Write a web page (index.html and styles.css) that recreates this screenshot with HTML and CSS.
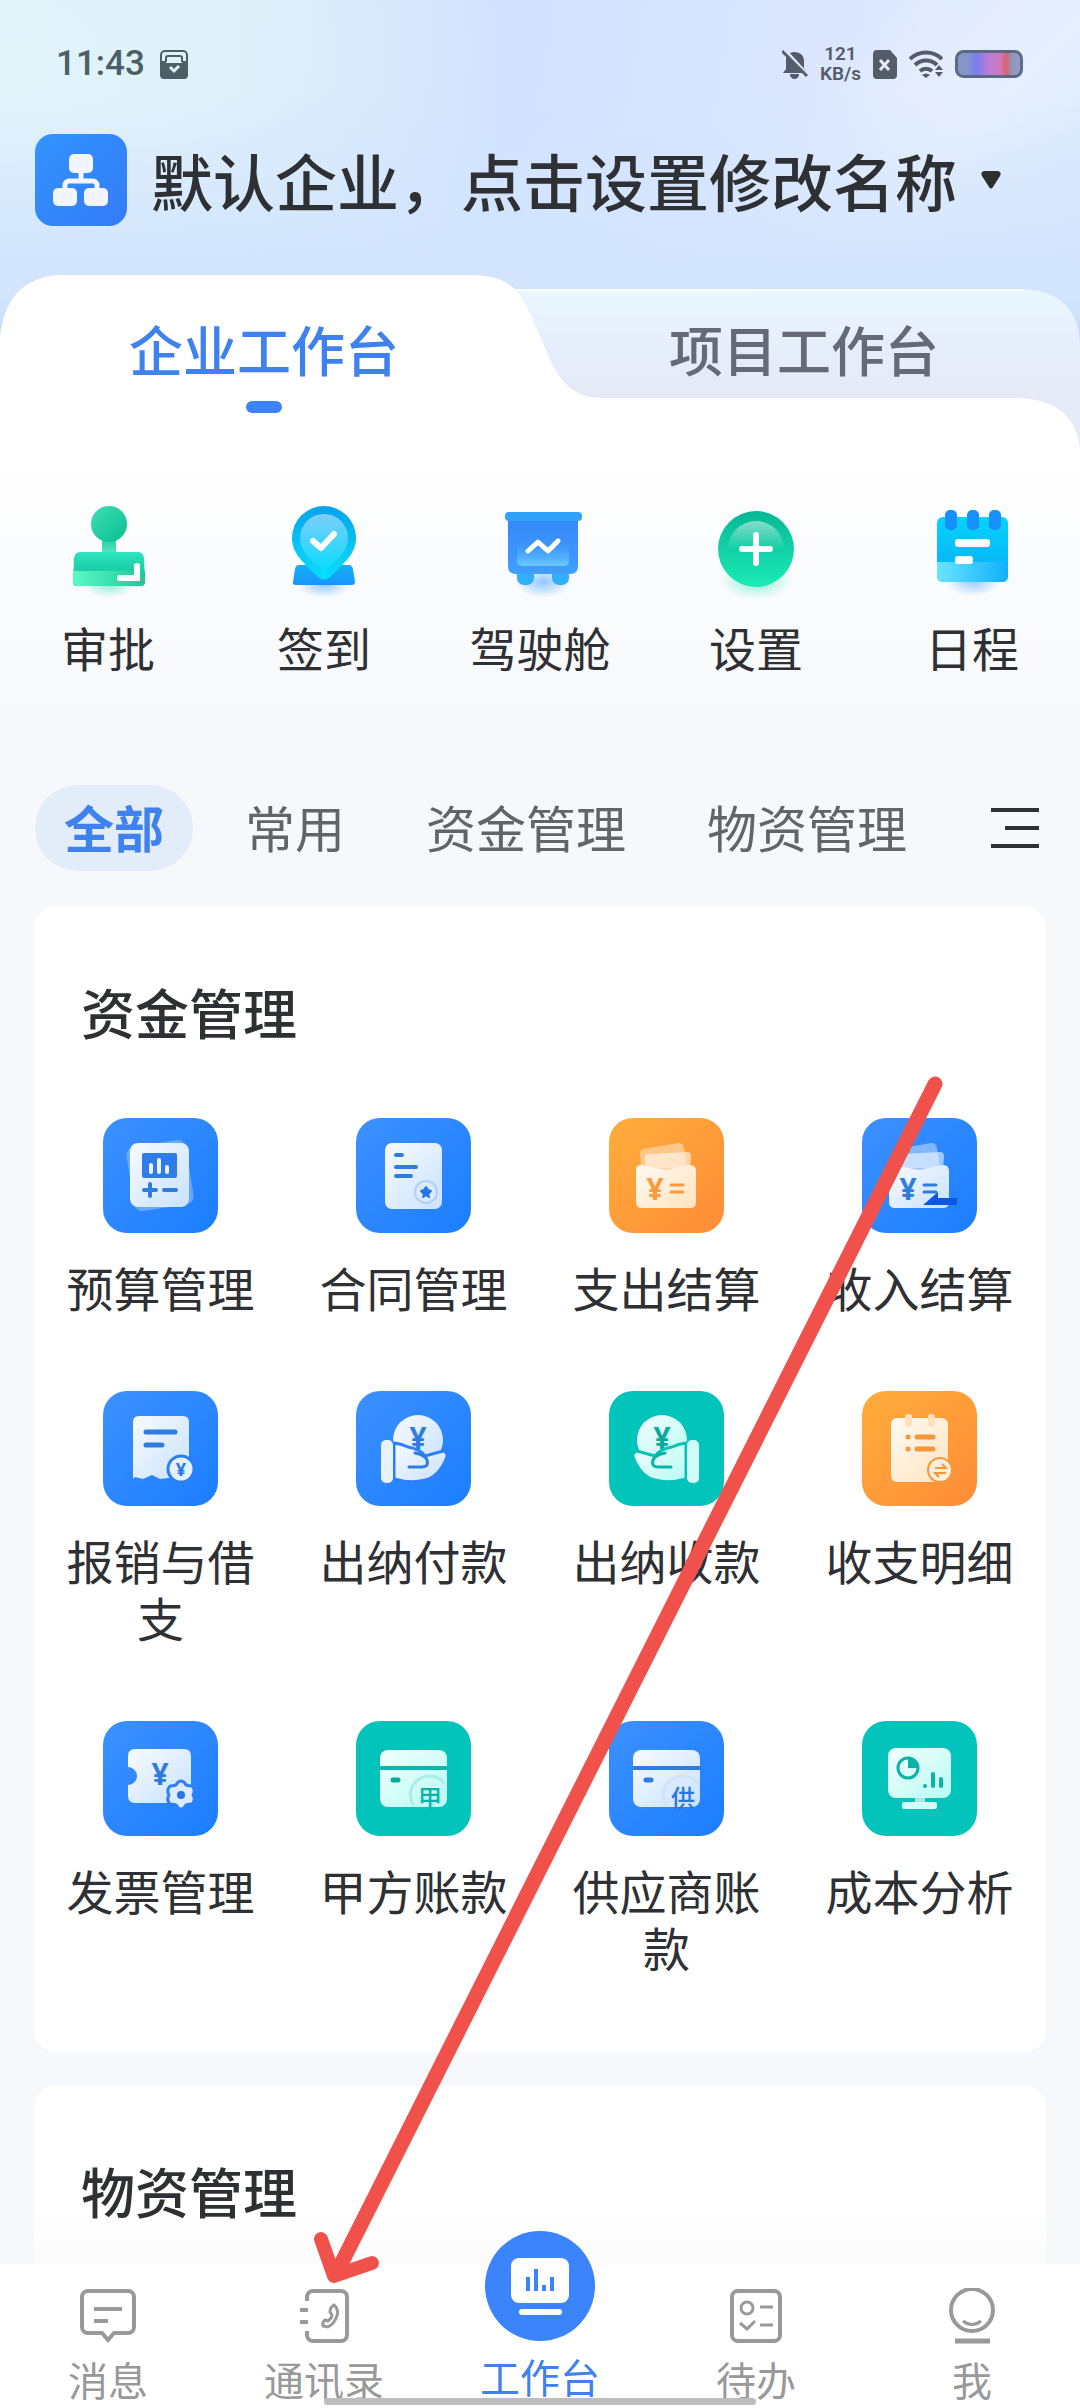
FILE: index.html
```html
<!DOCTYPE html>
<html lang="zh-CN">
<head>
<meta charset="utf-8">
<meta name="viewport" content="width=device-width, initial-scale=1">
<title>企业工作台</title>
<link rel="stylesheet" href="styles.css">
</head>
<body>
<svg class="defs" aria-hidden="true">
  <defs>
    <linearGradient id="g-paper" x1="0" y1="0" x2="1" y2="1"><stop offset="0" stop-color="#f7faff"/><stop offset="1" stop-color="#c9e2ff"/></linearGradient>
    <linearGradient id="g-mint" x1="0" y1="0" x2="1" y2="1"><stop offset="0" stop-color="#f2fefd"/><stop offset="1" stop-color="#b8fbf3"/></linearGradient>
    <linearGradient id="g-cream" x1="0" y1="0" x2="1" y2="1"><stop offset="0" stop-color="#fffaf3"/><stop offset="1" stop-color="#ffe3bd"/></linearGradient>
    <linearGradient id="g-ball" x1="0" y1="0" x2="1" y2="1"><stop offset="0" stop-color="#3de0b0"/><stop offset="1" stop-color="#08bd93"/></linearGradient>
    <linearGradient id="g-neck" x1="0" y1="0" x2="0" y2="1"><stop offset="0" stop-color="#22cfa5"/><stop offset="1" stop-color="#5fecc4"/></linearGradient>
    <linearGradient id="g-stamp" x1="0" y1="0" x2="0" y2="1"><stop offset="0" stop-color="#2ee3bd"/><stop offset="1" stop-color="#0abf96"/></linearGradient>
    <linearGradient id="g-foot" x1="0" y1="0" x2="1" y2="0"><stop offset="0" stop-color="#5bfac4"/><stop offset="1" stop-color="#1fc79b"/></linearGradient>
    <linearGradient id="g-pin" x1="0" y1="0" x2="0" y2="1"><stop offset="0" stop-color="#08a3ea"/><stop offset="1" stop-color="#06e0fd"/></linearGradient>
    <linearGradient id="g-pin2" x1="0" y1="0" x2="0" y2="1"><stop offset="0" stop-color="#7ccdf8"/><stop offset="1" stop-color="#06dcfd"/></linearGradient>
    <linearGradient id="g-base" x1="0" y1="0" x2="0" y2="1"><stop offset="0" stop-color="#12b0f6"/><stop offset="1" stop-color="#1a95fc"/></linearGradient>
    <linearGradient id="g-board" x1="0" y1="0" x2="0" y2="1"><stop offset="0" stop-color="#3488f8"/><stop offset="1" stop-color="#419efd"/></linearGradient>
    <linearGradient id="g-panel" x1="0" y1="0" x2="0" y2="1"><stop offset="0" stop-color="#3d98fb" stop-opacity="0"/><stop offset="1" stop-color="#6ccbff"/></linearGradient>
    <linearGradient id="g-plus" x1="0" y1="0" x2="0" y2="1"><stop offset="0" stop-color="#08b795"/><stop offset="1" stop-color="#1bebb6"/></linearGradient>
    <linearGradient id="g-shine" x1="0" y1="0" x2="0" y2="1"><stop offset="0" stop-color="#fff" stop-opacity=".5"/><stop offset=".5" stop-color="#fff" stop-opacity="0"/></linearGradient>
    <linearGradient id="g-cal" x1="0" y1="0" x2="0" y2="1"><stop offset="0" stop-color="#06d3fb"/><stop offset="1" stop-color="#08aef7"/></linearGradient>
    <linearGradient id="g-cal2" x1="0" y1="0" x2="1" y2="0"><stop offset="0" stop-color="#6ae4ff"/><stop offset="1" stop-color="#0fb0fa"/></linearGradient>
    <linearGradient id="g-tab" x1="0" y1="0" x2="0" y2="1"><stop offset="0" stop-color="#e9f7ff"/><stop offset=".3" stop-color="#e7effc"/><stop offset=".6" stop-color="#e5eaf7"/><stop offset="1" stop-color="#e3ebf8"/></linearGradient>
    <linearGradient id="g-battery" x1="0" y1="0" x2="1" y2="0"><stop offset="0" stop-color="#8496c2"/><stop offset=".18" stop-color="#8496cc"/><stop offset=".3" stop-color="#7b7cf0"/><stop offset=".5" stop-color="#bd7cd6"/><stop offset=".68" stop-color="#cf78bd"/><stop offset=".76" stop-color="#df5f6e"/><stop offset=".86" stop-color="#8d99bd"/><stop offset="1" stop-color="#8ba0c8"/></linearGradient>
    <radialGradient id="g-glow-green"><stop offset="0" stop-color="#2fe0b4" stop-opacity=".55"/><stop offset="1" stop-color="#2fe0b4" stop-opacity="0"/></radialGradient>
    <radialGradient id="g-glow-blue"><stop offset="0" stop-color="#3b9dff" stop-opacity=".55"/><stop offset="1" stop-color="#3b9dff" stop-opacity="0"/></radialGradient>
  </defs>
</svg>

<div class="app">
  <div class="hero">
    <div class="status">
      <div class="status-side status-left">
        <span class="clock">11:43</span>
        <svg width="28" height="29" viewBox="0 0 28 29"><rect x="1" y="1" width="26" height="26" rx="4" fill="none" stroke="currentColor" stroke-width="2"/><path d="M6 12V8a2 2 0 0 1 2-2h12a2 2 0 0 1 2 2v4" fill="none" stroke="currentColor" stroke-width="2"/><path d="M0 11h6v2h16v-2h6v14a4 4 0 0 1-4 4H4a4 4 0 0 1-4-4z" fill="currentColor"/><path d="M10 17l4 4 5-5" fill="none" stroke="#e4f3fa" stroke-width="3"/></svg>
      </div>
      <div class="status-side status-right">
        <svg width="26" height="30" viewBox="0 0 26 30"><path d="M5 8a9 9 0 0 1 17 3v8l3 4v1H1l3-4V9z" fill="currentColor"/><path d="M8 25h9a4 4 0 0 1-9 1z" fill="currentColor"/><path d="M2 0l25 27" stroke="#dbe7fd" stroke-width="3"/><path d="M0 2l25 25" stroke="currentColor" stroke-width="3"/></svg>
        <span class="rate"><span>121</span><span>KB/s</span></span>
        <svg width="24" height="29" viewBox="0 0 24 29"><path d="M4 0h13l7 8v17a4 4 0 0 1-4 4H4a4 4 0 0 1-4-4V4a4 4 0 0 1 4-4z" fill="currentColor"/><path d="M7 10l9 10M16 10l-9 10" stroke="#e3ebfd" stroke-width="3"/></svg>
        <svg width="34" height="28" viewBox="0 0 34 28"><g fill="none" stroke="currentColor" stroke-width="4"><path d="M1 9a23 23 0 0 1 32 0"/><path d="M6 15a16 16 0 0 1 22 0"/><path d="M11 21a9 9 0 0 1 12 0"/></g><path d="M13 25q4-3 8 0l-4 3z" fill="currentColor"/><path d="M26 20l4-5 4 5zM26 22l4 5 4-5z" fill="currentColor"/></svg>
        <svg width="68" height="28" viewBox="0 0 68 28"><rect x="1.500" y="1.500" width="65" height="25" rx="7" fill="url(#g-battery)" stroke="#5c6a86" stroke-width="3"/></svg>
      </div>
    </div>

    <header class="company">
      <svg class="company-logo" viewBox="0 0 92 92"><g fill="none" stroke="#f4f7ff" stroke-width="5"><path d="M46 38v9M30 56v-5a4 4 0 0 1 4-4h24a4 4 0 0 1 4 4v5"/></g><g fill="#f2f5ff"><rect x="34" y="20" width="24" height="19" rx="5"/><rect x="18" y="54" width="24" height="18" rx="5"/><rect x="49" y="54" width="24" height="18" rx="5"/></g></svg>
      <button class="company-name" type="button"><span>默认企业，点击设置修改名称</span>
        <svg width="20" height="18" viewBox="0 0 20 18"><path d="M3 0h14q4 1 2 5l-7 11q-2 3-4 0L1 5q-2-4 2-5z" fill="#2d302c"/></svg>
      </button>
    </header>

    <div class="tabs" role="tablist">
      <svg class="tabs-shape" viewBox="0 0 1080 175" preserveAspectRatio="none" aria-hidden="true">
        <path d="M440 14H1024Q1080 18 1080 72V175H440z" fill="url(#g-tab)"/>
        <path d="M500 15H1024" stroke="#fbfeff" stroke-width="2"/>
        <path d="M0 175V62Q6 4 58 0H470C505 0 518 12 530 38L548 80C560 108 575 123 602 123H1020Q1076 126 1080 175z" fill="#fff"/>
      </svg>
      <button class="tab tab-on" type="button" role="tab" aria-selected="true">企业工作台</button>
      <button class="tab" type="button" role="tab" aria-selected="false">项目工作台</button>
    </div>
  </div>

  <nav class="quick">
    <a class="quick-item" href="#">
      <svg viewBox="0 0 100 100"><ellipse cx="51" cy="84" rx="26" ry="14" fill="url(#g-glow-green)"/><path d="M44 38h14v18H44z" fill="url(#g-neck)"/><path d="M22 52h58q5 0 6 6l1 23q0 5-4 5H19q-5 0-4-5l1-23q1-6 6-6z" fill="url(#g-stamp)"/><path d="M15 71h72v10q0 5-4 5H19q-5 0-4-5z" fill="url(#g-foot)"/><circle cx="51" cy="24" r="18" fill="url(#g-ball)"/><path d="M79 66v12H62" fill="none" stroke="#fff" stroke-width="6" stroke-linecap="round"/></svg>
      <span>审批</span></a>
    <a class="quick-item" href="#">
      <svg viewBox="0 0 100 100"><ellipse cx="50" cy="84" rx="26" ry="14" fill="url(#g-glow-blue)"/><path d="M25 65h50q3 0 4 4l2 13q0 3-3 3H22q-4 0-3-3l2-13q1-4 4-4z" fill="url(#g-base)"/><path d="M50 6a32 32 0 0 1 32 32c0 16-12 25-26 39q-6 5-12 0C30 63 18 54 18 38A32 32 0 0 1 50 6z" fill="url(#g-pin)"/><path d="M50 14a24 24 0 0 1 24 24c0 13-10 22-24 34C36 60 26 51 26 38a24 24 0 0 1 24-24z" fill="url(#g-pin2)"/><path d="M39 41l8 7 13-14" fill="none" stroke="#fff" stroke-width="6" stroke-linecap="round" stroke-linejoin="round"/></svg>
      <span>签到</span></a>
    <a class="quick-item" href="#">
      <svg viewBox="0 0 100 100"><ellipse cx="53" cy="82" rx="28" ry="16" fill="url(#g-glow-blue)"/><rect x="27" y="68" width="17" height="17" rx="7" fill="#2fb1fa"/><rect x="62" y="68" width="17" height="17" rx="7" fill="#2fb1fa"/><path d="M18 18h70v48q0 8-8 8H26q-8 0-8-8z" fill="url(#g-board)"/><rect x="27" y="40" width="52" height="26" rx="5" fill="url(#g-panel)"/><rect x="15" y="12" width="77" height="9" rx="4" fill="#2fa3fa"/><path d="M38 51l10-9 10 9 10-10" fill="none" stroke="#fff" stroke-width="5" stroke-linecap="round" stroke-linejoin="round"/></svg>
      <span>驾驶舱</span></a>
    <a class="quick-item" href="#">
      <svg viewBox="0 0 100 100"><ellipse cx="50" cy="80" rx="36" ry="20" fill="url(#g-glow-green)"/><circle cx="50" cy="49" r="38" fill="url(#g-plus)"/><circle cx="50" cy="49" r="28" fill="url(#g-shine)"/><path d="M50 35v28M36 49h28" stroke="#fff" stroke-width="6" stroke-linecap="round"/></svg>
      <span>设置</span></a>
    <a class="quick-item" href="#">
      <svg viewBox="0 0 100 100"><ellipse cx="51" cy="80" rx="28" ry="16" fill="url(#g-glow-blue)"/><rect x="15" y="17" width="71" height="65" rx="6" fill="url(#g-cal)"/><path d="M15 62h71v14q0 6-6 6H21q-6 0-6-6z" fill="url(#g-cal2)"/><g fill="#1690fb"><rect x="23" y="10" width="12" height="20" rx="5"/><rect x="45" y="10" width="12" height="20" rx="5"/><rect x="67" y="10" width="12" height="20" rx="5"/></g><g fill="#fff"><rect x="33" y="39" width="35" height="8" rx="3"/><rect x="33" y="56" width="18" height="8" rx="3"/></g></svg>
      <span>日程</span></a>
  </nav>

  <div class="filters">
    <button class="filter filter-on" type="button">全部</button>
    <button class="filter" type="button">常用</button>
    <button class="filter" type="button">资金管理</button>
    <button class="filter" type="button">物资管理</button>
    <button class="filter-menu" type="button" aria-label="全部分类"><svg width="48" height="42" viewBox="0 0 48 42"><path d="M0 3h48M14 21h34M0 39h48" stroke="#2f3033" stroke-width="4"/></svg></button>
  </div>

  <main class="cards">
    <section class="card">
      <h2>资金管理</h2>
      <div class="grid">
        <a class="entry" href="#">
          <svg class="tile blue" viewBox="0 0 115 115"><rect x="27" y="25" width="60" height="65" rx="8" fill="#8fc0ff" opacity=".6" transform="rotate(-9 57 57)"/><rect x="27" y="25" width="59" height="64" rx="8" fill="url(#g-paper)"/><rect x="39" y="35" width="35" height="25" rx="2" fill="#2f7ce8"/><path d="M48 47v7M56 42v12M64 49v5" stroke="#eaf3ff" stroke-width="4" stroke-linecap="round"/><path d="M41 72h12M47 66v12M61 72h12" stroke="#2f7ce0" stroke-width="4" stroke-linecap="round"/></svg>
          <span>预算管理</span></a>
        <a class="entry" href="#">
          <svg class="tile blue" viewBox="0 0 115 115"><rect x="29" y="25" width="57" height="66" rx="7" fill="url(#g-paper)"/><path d="M40 37h6M40 49h20M40 58h15" stroke="#2f7ce0" stroke-width="4" stroke-linecap="round"/><circle cx="70" cy="74" r="11" fill="#d9eafd" stroke="#b3cff3" stroke-width="2"/><path d="M70 69l2 3 3 1-3 3 1 3-3-2-3 2 1-3-3-3 3-1z" fill="#2775e6" stroke="#2775e6" stroke-width="2" stroke-linejoin="round"/></svg>
          <span>合同管理</span></a>
        <a class="entry" href="#">
          <svg class="tile orange" viewBox="0 0 115 115"><path d="M31 36q0-4 4-5l34-6q5 0 6 5l3 20H32z" fill="#fff" opacity=".4"/><path d="M36 39q0-3 4-3l38-2q4 0 4 4l-1 14H36z" fill="#fff" opacity=".55"/><path d="M32 47l25 5 24-5q6 0 6 6v31q0 6-6 6H33q-6 0-6-6V52q0-5 5-5z" fill="url(#g-cream)"/><text class="yen" x="46" y="82" fill="#f99a3c">¥</text><path d="M62 67h12M62 74h12" stroke="#f99a3c" stroke-width="3" stroke-linecap="round"/></svg>
          <span>支出结算</span></a>
        <a class="entry" href="#">
          <svg class="tile blue" viewBox="0 0 115 115"><path d="M31 36q0-4 4-5l34-6q5 0 6 5l3 20H32z" fill="#fff" opacity=".4"/><path d="M36 39q0-3 4-3l38-2q4 0 4 4l-1 14H36z" fill="#fff" opacity=".55"/><path d="M32 47l25 5 24-5q6 0 6 6v31q0 6-6 6H33q-6 0-6-6V52q0-5 5-5z" fill="url(#g-paper)"/><text class="yen" x="46" y="82" fill="#2f7ce0">¥</text><path d="M62 67h12M62 74h12" stroke="#2f7ce0" stroke-width="3" stroke-linecap="round"/><path d="M61 87l15-13v6h19v7z" fill="#0b57e0"/></svg>
          <span>收入结算</span></a>
        <a class="entry" href="#">
          <svg class="tile blue" viewBox="0 0 115 115"><path d="M36 25h44q6 0 6 6v56l-8-1-13 1-8 1-8-4-9 4-8-2-2 2V31q0-6 6-6z" fill="url(#g-paper)"/><path d="M43 41h29M43 54h16" stroke="#2f7ce0" stroke-width="5" stroke-linecap="round"/><circle cx="78" cy="78" r="13" fill="#e3f0ff" stroke="#2b7ff5" stroke-width="3"/><text class="yen yen-small" x="78" y="85" fill="#2775e6">¥</text></svg>
          <span>报销与借支</span></a>
        <a class="entry" href="#">
          <svg class="tile blue" viewBox="0 0 115 115"><circle cx="62" cy="49" r="25" fill="url(#g-paper)"/><text class="yen" x="62" y="58" fill="#2f7ce0">¥</text><path d="M38 52q8 1 14 4 12 2 17 9l18-5q5 1 4 6Q83 86 69 89q-14 4-31-1z" fill="url(#g-paper)" stroke="#2b80fa" stroke-width="3"/><path d="M53 76h13q7 0 5-7-2-5-12-7" fill="none" stroke="#2f7ce0" stroke-width="3" stroke-linecap="round"/><rect x="25" y="49" width="12" height="43" rx="5" fill="#e8f2ff"/></svg>
          <span>出纳付款</span></a>
        <a class="entry" href="#">
          <svg class="tile teal" viewBox="0 0 115 115"><circle cx="53" cy="49" r="25" fill="url(#g-mint)"/><text class="yen" x="53" y="58" fill="#0aa99d">¥</text><path d="M77 52q-8 1-14 4-12 2-17 9l-18-5q-5 1-4 6Q32 86 46 89q14 4 31-1z" fill="url(#g-mint)" stroke="#05c3b8" stroke-width="3"/><path d="M62 76H49q-7 0-5-7 2-5 12-7" fill="none" stroke="#0ab3a8" stroke-width="3" stroke-linecap="round"/><rect x="78" y="49" width="12" height="43" rx="5" fill="#d0fbf7"/></svg>
          <span>出纳收款</span></a>
        <a class="entry" href="#">
          <svg class="tile orange" viewBox="0 0 115 115"><rect x="29" y="27" width="57" height="64" rx="6" fill="url(#g-cream)"/><g fill="#ffe0bd"><rect x="43" y="23" width="7" height="13" rx="3"/><rect x="66" y="23" width="7" height="13" rx="3"/></g><path d="M46 46h0M55 46h16M46 58h0M55 58h16" stroke="#f6963a" stroke-width="5" stroke-linecap="round"/><circle cx="78" cy="79" r="12" fill="#ffeedb" stroke="#fa9838" stroke-width="2"/><path d="M73 77h11l-4-4M84 82H73l4 4" fill="none" stroke="#f6963a" stroke-width="2"/></svg>
          <span>收支明细</span></a>
        <a class="entry" href="#">
          <svg class="tile blue" viewBox="0 0 115 115"><path d="M32 28h49q7 0 7 7v40q0 7-7 7H32q-7 0-7-7V64a9 9 0 0 0 0-18V35q0-7 7-7z" fill="url(#g-paper)"/><text class="yen" x="57" y="64" fill="#2f7ce0">¥</text><path d="M78 60q3 0 5 4 3 1 6 1 4 4 1 9 3 5-1 9-3 0-6 1-2 4-5 4t-5-4q-3-1-6-1-4-4-1-9-3-5 1-9 3 0 6-1 2-4 5-4z" fill="#dcebff" stroke="#2b80fa" stroke-width="3" stroke-linejoin="round"/><circle cx="78" cy="74" r="4" fill="#2775e6"/></svg>
          <span>发票管理</span></a>
        <a class="entry" href="#">
          <svg class="tile teal" viewBox="0 0 115 115"><rect x="24" y="29" width="67" height="57" rx="8" fill="url(#g-mint)"/><path d="M24 47h67" stroke="#0db5aa" stroke-width="4"/><path d="M37 59h5" stroke="#0aa99d" stroke-width="5" stroke-linecap="round"/><path d="M58 85a19 19 0 0 1 31-22" fill="none" stroke="#a9eee6" stroke-width="3"/><text class="mark" x="74" y="86" fill="#0cb3a7">甲</text></svg>
          <span>甲方账款</span></a>
        <a class="entry" href="#">
          <svg class="tile blue" viewBox="0 0 115 115"><rect x="24" y="29" width="67" height="57" rx="8" fill="url(#g-paper)"/><path d="M24 47h67" stroke="#2f7ce0" stroke-width="4"/><path d="M37 59h5" stroke="#2f7ce0" stroke-width="5" stroke-linecap="round"/><path d="M58 85a19 19 0 0 1 31-22" fill="none" stroke="#cfe1fb" stroke-width="3"/><text class="mark" x="74" y="86" fill="#2775e6">供</text></svg>
          <span>供应商账款</span></a>
        <a class="entry" href="#">
          <svg class="tile teal" viewBox="0 0 115 115"><path d="M53 76h10v6H53z" fill="#9eeae3"/><rect x="40" y="81" width="35" height="7" rx="2" fill="#d5fcf8"/><rect x="26" y="27" width="63" height="50" rx="8" fill="url(#g-mint)"/><circle cx="46" cy="47" r="10" fill="none" stroke="#0cb3a7" stroke-width="3"/><path d="M46 37v10h10a10 10 0 0 0-10-10z" fill="#0cb3a7"/><path d="M63 65h0M71 53v12M79 58v7" stroke="#0cb3a7" stroke-width="4" stroke-linecap="round"/></svg>
          <span>成本分析</span></a>
      </div>
    </section>
    <section class="card card-last">
      <h2>物资管理</h2>
    </section>
  </main>

  <nav class="bar">
    <a class="bar-item" href="#"><svg width="58" height="56" viewBox="0 0 58 56"><path d="M9 3h40a6 6 0 0 1 6 6v30a6 6 0 0 1-6 6H35l-6 7-6-7H9a6 6 0 0 1-6-6V9a6 6 0 0 1 6-6z"/><path d="M15 21h28M15 33h14"/></svg><span>消息</span></a>
    <a class="bar-item" href="#"><svg width="58" height="56" viewBox="0 0 58 56"><path d="M12 13V9a6 6 0 0 1 6-6h28a6 6 0 0 1 6 6v38a6 6 0 0 1-6 6H18a6 6 0 0 1-6-6v-4M5 22h8M5 34h8"/><path d="M39 17q5 4 3 11-3 8-9 11l-5-1q-1-4 2-6l3 1q4-3 4-6l-2-3q0-5 4-7z" stroke-width="3"/></svg><span>通讯录</span></a>
    <a class="bar-item bar-on" href="#"><svg class="bar-disc" width="110" height="110" viewBox="0 0 110 110"><circle cx="55" cy="55" r="55" fill="#3b84fb"/><rect x="26" y="27" width="58" height="45" rx="8" fill="#fff"/><path d="M43 46v14M51 38v22M59 54v6M67 46v14" stroke="#3b84fb" stroke-width="4"/><path d="M37 81h37" stroke="#fff" stroke-width="6" stroke-linecap="round"/></svg><span>工作台</span></a>
    <a class="bar-item" href="#"><svg width="58" height="56" viewBox="0 0 58 56"><rect x="5" y="3" width="48" height="50" rx="6"/><g stroke-width="3"><circle cx="20" cy="20" r="6"/><path d="M33 19h13M33 37h13M13 35l7 6 8-8"/></g></svg><span>待办</span></a>
    <a class="bar-item" href="#"><svg width="58" height="56" viewBox="0 0 58 56"><circle cx="29" cy="22" r="21"/><path d="M20 33q9 7 18 0" stroke-width="3"/><path d="M12 53h35" stroke-width="5"/></svg><span>我</span></a>
    <div class="home-line"></div>
  </nav>

  <svg class="pointer" viewBox="0 0 1080 2408" preserveAspectRatio="xMidYMin meet" aria-hidden="true"><path d="M935 1084L336 2274" stroke-width="15"/><path d="M321 2239L334 2276L372 2263" stroke-width="14"/></svg>
</div>
</body>
</html>
```
FILE: styles.css
```css
* { box-sizing: border-box; }

body {
  margin: 0;
  background: #f6f8fb;
  color: #2f3033;
  font-family: "Noto Sans CJK SC", sans-serif;
  font-size: 47px;
  line-height: 57px;
}

a { color: inherit; text-decoration: none; }

button {
  margin: 0;
  padding: 0;
  border: 0;
  background: none;
  color: inherit;
  font: inherit;
  cursor: pointer;
}

svg { display: block; flex: none; }

.defs { position: absolute; width: 0; height: 0; }

.app {
  position: relative;
  display: flex;
  flex-direction: column;
  min-height: 100vh;
}

/* hero */
.hero {
  background:
    linear-gradient(180deg, rgba(200, 224, 252, 0) 66%, #bcd9f9 78%),
    linear-gradient(180deg, rgba(213, 229, 252, 0) 20%, #d3e5fd 58%),
    linear-gradient(135deg, rgba(255, 255, 255, 0) 58%, rgba(255, 255, 255, .3) 72%, rgba(255, 255, 255, 0) 88%),
    radial-gradient(circle at 0 25%, #e3f4fb 0, rgba(222, 240, 250, 0) 45%),
    radial-gradient(circle at 0 0, #d9f0f4 0, rgba(217, 240, 246, 0) 45%),
    linear-gradient(100deg, #d9ecfb, #d1e1ff 45%, #dfe9ff 80%, #d8e8fd);
}

.status {
  display: flex;
  justify-content: space-between;
  align-items: center;
  padding: 42px 57px 0 56px;
}

.status-side { display: flex; align-items: center; height: 44px; }
.status-left { gap: 15px; color: #4c5e66; }
.status-right { gap: 12px; color: #545b69; }

.clock { font: 500 35px/44px Roboto, sans-serif; }

.rate {
  display: grid;
  justify-items: center;
  font: 600 19px/20px Roboto, sans-serif;
}

.company {
  display: flex;
  align-items: center;
  gap: 24px;
  padding: 48px 35px 49px;
}

.company-logo {
  width: 92px;
  height: 92px;
  border-radius: 18px;
  background: linear-gradient(135deg, #3294ff, #337bf6);
}

.company-name {
  display: flex;
  align-items: center;
  gap: 24px;
  font-size: 62px;
  font-weight: 500;
  line-height: 80px;
  white-space: nowrap;
}

.tabs {
  position: relative;
  display: grid;
  grid-template-columns: 528fr 552fr;
  align-items: start;
  height: 175px;
}

.tabs-shape {
  position: absolute;
  inset: 0;
  width: 100%;
  height: 100%;
}

.tab {
  position: relative;
  padding-top: 38px;
  color: #646a77;
  font-size: 54px;
  font-weight: 500;
  line-height: 72px;
}

.tab-on { color: #3f82ee; }

.tab-on::after {
  content: "";
  display: block;
  width: 36px;
  height: 12px;
  margin: 16px auto 0;
  border-radius: 6px;
  background: #3b84fb;
}

/* shortcuts */
.quick {
  display: grid;
  grid-template-columns: repeat(5, 1fr);
  padding: 50px 0 110px;
  background: linear-gradient(180deg, #fff, #f6f8fb 80%);
}

.quick-item {
  display: grid;
  justify-items: center;
  gap: 18px;
}

.quick-item svg { width: 100px; height: 100px; }

/* category filter */
.filters {
  display: flex;
  align-items: center;
  gap: 23px;
  padding: 0 41px 35px 35px;
}

.filter {
  padding: 0 29px 4px;
  border-radius: 43px;
  color: #626467;
  font-size: 50px;
  line-height: 82px;
}

.filter-on {
  background: #e3edf9;
  color: #3f82ee;
  font-weight: 700;
}

.filter-menu { margin-left: auto; }

/* cards */
.cards {
  flex: 1;
  display: flex;
  flex-direction: column;
  gap: 33px;
  padding: 0 34px;
}

.card {
  padding: 70px 0 77px;
  border-radius: 22px;
  background: #fff;
}

.card-last {
  flex: 1;
  padding-bottom: 34px;
  border-radius: 22px 22px 0 0;
  background: linear-gradient(180deg, #fff 70%, #fbfbfc);
}

h2 {
  margin: 0;
  padding: 0 47px;
  font-size: 54px;
  font-weight: 500;
  line-height: 72px;
}

.grid {
  display: grid;
  grid-template-columns: repeat(4, 1fr);
  row-gap: 76px;
  margin-top: 70px;
}

.entry {
  display: grid;
  align-content: start;
  justify-items: center;
  gap: 25px;
  padding: 0 20px;
  text-align: center;
}

.tile { width: 115px; height: 115px; border-radius: 24px; }
.blue { background: linear-gradient(135deg, #3d91ff, #1b7dff); }
.orange { background: linear-gradient(135deg, #ffad3b, #ff8c38); }
.teal { background: #03c4ba; }

.yen {
  font: 700 30px "Noto Sans", sans-serif;
  text-anchor: middle;
}

.yen-small { font-size: 18px; }

.mark {
  font: 500 24px "Noto Sans CJK SC", sans-serif;
  text-anchor: middle;
}

/* bottom bar: the middle item rises above its top edge */
.bar {
  position: relative;
  display: grid;
  grid-template-columns: repeat(5, 1fr);
  grid-template-rows: 144px;
  align-items: end;
  background: #fff;
}

.bar-item {
  display: grid;
  justify-items: center;
  gap: 9px;
  padding-bottom: 3px;
  color: #999;
  font-size: 40px;
  line-height: 52px;
}

.bar-item svg { fill: none; stroke: currentColor; stroke-width: 4; }

.bar-on { padding-bottom: 6px; color: #3f82ee; }
.bar-on .bar-disc { stroke: none; }

.home-line {
  position: absolute;
  bottom: 3px;
  left: 30%;
  width: 40%;
  height: 7px;
  border-radius: 4px;
  background: #bdbdbd;
}

/* annotation drawn over the screen */
.pointer {
  position: absolute;
  top: 0;
  left: 0;
  width: 100%;
  pointer-events: none;
  fill: none;
  stroke: #f0524b;
  stroke-linecap: round;
  stroke-linejoin: round;
}
```
